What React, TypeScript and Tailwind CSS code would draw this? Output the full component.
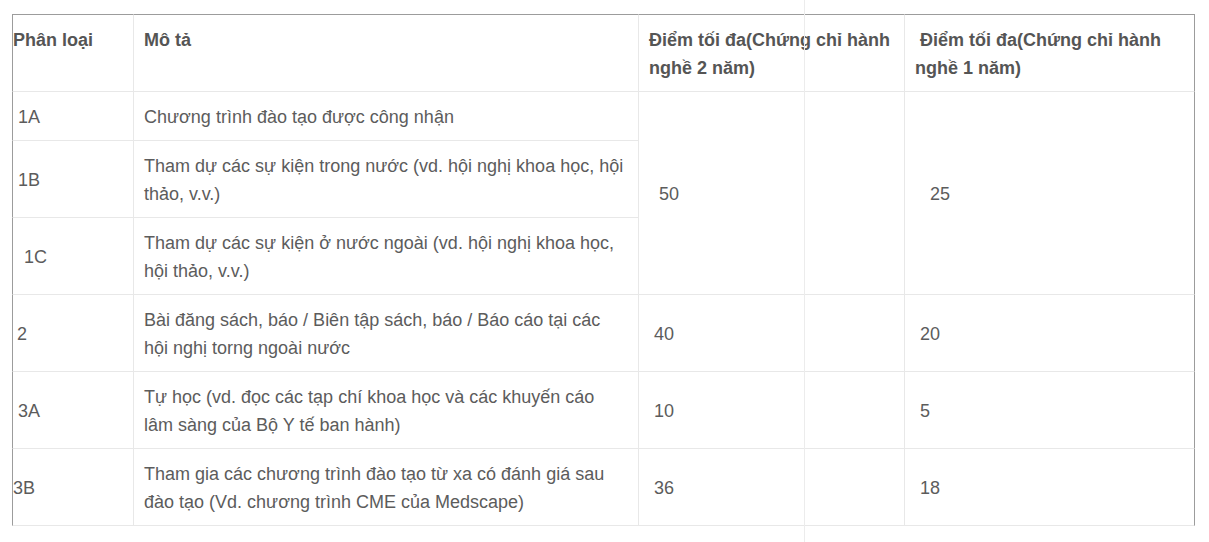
import React from "react";

const dark = "border-[#9c9c9c]";

type Row = {
  code: string;
  codePad: string;
  desc: string[];
  v2?: string;
  v1?: string;
  v2Pad?: string;
  v1Pad?: string;
  span?: number;
};

const rows: Row[] = [
  {
    code: "1A",
    codePad: "pl-[5px]",
    desc: ["Chương trình đào tạo được công nhận"],
    v2: "50",
    v1: "25",
    v2Pad: "pl-[20px]",
    v1Pad: "pl-[25px]",
    span: 3,
  },
  {
    code: "1B",
    codePad: "pl-[5px]",
    desc: [
      "Tham dự các sự kiện trong nước (vd. hội nghị khoa học, hội",
      "thảo, v.v.)",
    ],
  },
  {
    code: "1C",
    codePad: "pl-[11px]",
    desc: [
      "Tham dự các sự kiện ở nước ngoài (vd. hội nghị khoa học,",
      "hội thảo, v.v.)",
    ],
  },
  {
    code: "2",
    codePad: "pl-[4px]",
    desc: [
      "Bài đăng sách, báo / Biên tập sách, báo / Báo cáo tại các",
      "hội nghị torng ngoài nước",
    ],
    v2: "40",
    v1: "20",
    v2Pad: "pl-[15px]",
    v1Pad: "pl-[15px]",
  },
  {
    code: "3A",
    codePad: "pl-[5px]",
    desc: [
      "Tự học (vd. đọc các tạp chí khoa học và các khuyến cáo",
      "lâm sàng của Bộ Y tế ban hành)",
    ],
    v2: "10",
    v1: "5",
    v2Pad: "pl-[15px]",
    v1Pad: "pl-[15px]",
  },
  {
    code: "3B",
    codePad: "pl-0",
    desc: [
      "Tham gia các chương trình đào tạo từ xa có đánh giá sau",
      "đào tạo (Vd. chương trình CME của Medscape)",
    ],
    v2: "36",
    v1: "18",
    v2Pad: "pl-[15px]",
    v1Pad: "pl-[15px]",
  },
];

export default function App() {
  return (
    <div
      className="relative min-h-[542px] pt-[14px] pl-[12px] text-[18px] leading-7 text-[#5c5c5c]"
      style={{ fontFamily: '"Liberation Sans", Arial, sans-serif' }}
    >
      <div className="absolute left-[804px] top-0 bottom-0 w-px bg-[#ececec]" />
      <table className="table-fixed border-separate border-spacing-0 w-[1183px]">
        <colgroup>
          <col className="w-[122px]" />
          <col className="w-[505px]" />
          <col className="w-[266px]" />
          <col className="w-[290px]" />
        </colgroup>
        <thead>
          <tr>
            <th
              className={`text-left align-top font-bold text-[#555] pt-[11px] pb-[9px] pl-0 border-t border-l border-b border-r border-b-[#e8e8e8] border-r-[#e8e8e8] ${dark}`}
            >
              Phân loại
            </th>
            <th className="text-left align-top font-bold text-[#555] pt-[11px] pb-[9px] pl-[10px] border-t border-b border-r border-t-[#9c9c9c] border-b-[#e8e8e8] border-r-[#e8e8e8]">
              Mô tả
            </th>
            <th className="text-left align-top font-bold text-[#555] pt-[11px] pb-[9px] pl-[10px] whitespace-nowrap border-t border-b border-r border-t-[#9c9c9c] border-b-[#e8e8e8] border-r-[#e8e8e8]">
              Điểm tối đa(Chứng chỉ hành
              <br />
              nghề 2 năm)
            </th>
            <th className="text-left align-top font-bold text-[#555] pt-[11px] pb-[9px] pl-[10px] whitespace-nowrap border-t border-b border-r border-t-[#9c9c9c] border-b-[#e8e8e8] border-r-[#9c9c9c]">
              {"\u00a0"}Điểm tối đa(Chứng chỉ hành
              <br />
              nghề 1 năm)
            </th>
          </tr>
        </thead>
        <tbody>
          {rows.map((r) => (
            <tr key={r.code}>
              <td
                className={`align-middle pt-[11px] pb-[9px] ${r.codePad} border-l border-b border-r border-l-[#9c9c9c] border-b-[#e8e8e8] border-r-[#e8e8e8]`}
              >
                {r.code}
              </td>
              <td className="align-middle pt-[11px] pb-[9px] pl-[10px] whitespace-nowrap border-b border-r border-[#e8e8e8]">
                {r.desc.map((line, i) => (
                  <React.Fragment key={i}>
                    {i > 0 && <br />}
                    {line}
                  </React.Fragment>
                ))}
              </td>
              {r.v2 && (
                <>
                  <td
                    rowSpan={r.span || 1}
                    className={`align-middle pt-[11px] pb-[9px] ${r.v2Pad} border-b border-r border-[#e8e8e8]`}
                  >
                    {r.v2}
                  </td>
                  <td
                    rowSpan={r.span || 1}
                    className={`align-middle pt-[11px] pb-[9px] ${r.v1Pad} border-b border-r border-b-[#e8e8e8] border-r-[#9c9c9c]`}
                  >
                    {r.v1}
                  </td>
                </>
              )}
            </tr>
          ))}
        </tbody>
      </table>
    </div>
  );
}
